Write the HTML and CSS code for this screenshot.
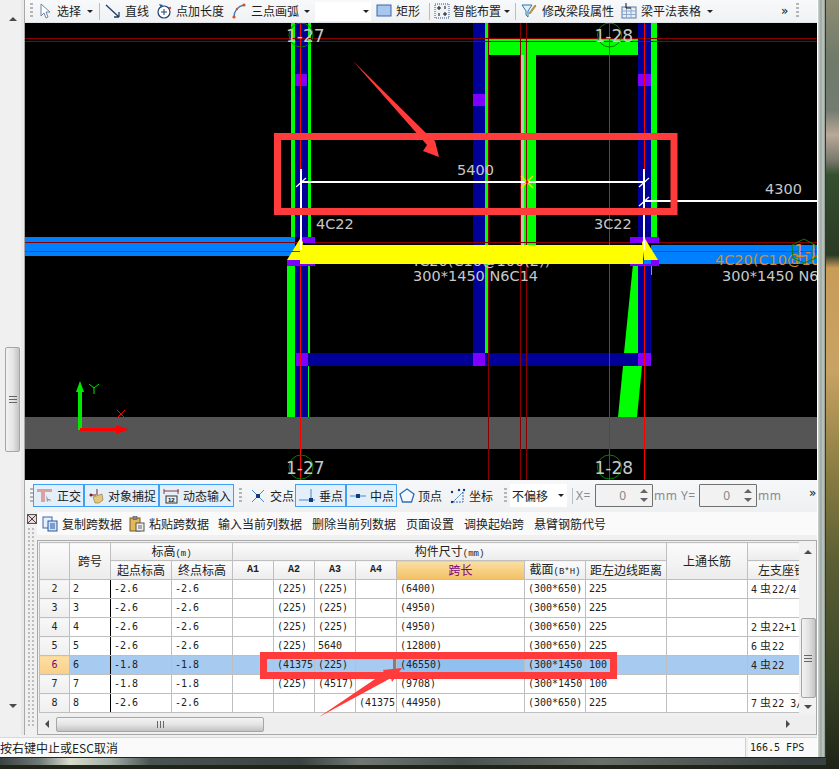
FILE: index.html
```html
<!DOCTYPE html>
<html lang="zh-CN">
<head>
<meta charset="utf-8">
<title>梁平法表格</title>
<link rel="stylesheet" href="styles.css">
</head>
<body>
<div class="screen">
  <div class="window">
    <div class="window-main">
      <div class="columns">
        <aside class="side">
          <div class="side-scroll">
            <span class="arrow-up"></span>
            <div class="side-thumb"><span class="thumb-lines"></span></div>
            <span class="arrow-down"></span>
          </div>
        </aside>
        <main class="content">
          <div class="tb tb-top">
            <span class="grip"></span>
            <div class="tool w-select"><svg class="ic" viewBox="0 0 16 16"><path d="M4 1v12l3-3 2 5 2-1-2-5h4z" fill="#fff" stroke="#6f86a8"/></svg><span>选择</span></div>
            <span class="caret"></span>
            <span class="sep sep-a"></span>
            <div class="tool w-line"><svg class="ic" viewBox="0 0 16 16"><path d="M1 2l13 12M14 14v-5M14 14H9" fill="none" stroke="#1f3f6f" stroke-width="1.3"/></svg><span>直线</span></div>
            <div class="tool w-len"><svg class="ic" viewBox="0 0 16 16"><circle cx="8" cy="9" r="6" fill="#fff" stroke="#1f3f6f" stroke-width="1.2"/><path d="M8 6v6M5 9h6" stroke="#1f3f6f"/><path d="M3 1l2 4 2-3z" fill="#1f5fa0"/><circle cx="14" cy="5" r="1.2" fill="#d9532a"/></svg><span>点加长度</span></div>
            <div class="tool w-arc"><svg class="ic" viewBox="0 0 16 16"><path d="M3 14C3 8 7 3 13 2" fill="none" stroke="#3f78b8" stroke-width="1.4"/><circle cx="3" cy="14" r="1.6" fill="#d9532a"/><circle cx="13" cy="2" r="1.6" fill="#d9532a"/><circle cx="6" cy="6" r="1.2" fill="#d9532a"/></svg><span>三点画弧</span></div>
            <span class="caret"></span>
            <div class="combo-top"><span class="caret"></span></div>
            <div class="tool w-rect"><svg class="ic" viewBox="0 0 16 16"><rect x="1" y="2" width="14" height="11" fill="#a9c6ee" stroke="#3a66b0"/></svg><span>矩形</span></div>
            <span class="sep"></span>
            <div class="tool w-smart"><svg class="ic" viewBox="0 0 16 16"><rect x="1" y="1" width="14" height="14" fill="#eef3f8" stroke="#33507a" stroke-dasharray="1 1"/><path d="M5 3v4M3 5h4M11 9v4M9 11h4M11 3v3M5 10v3" stroke="#111"/></svg><span>智能布置</span></div>
            <span class="caret"></span>
            <span class="sep"></span>
            <div class="tool w-mod"><svg class="ic" viewBox="0 0 16 16"><path d="M1 2h10L7 8v6l-2-2V8z" fill="#dff0fa" stroke="#2d79a8"/><path d="M8 10l6-8 1 1-6 8z" fill="#d8a040" stroke="#665020" stroke-width=".5"/></svg><span>修改梁段属性</span></div>
            <div class="tool w-tbl"><svg class="ic" viewBox="0 0 16 16"><rect x="1" y="4" width="14" height="11" fill="#e6eef8" stroke="#5a7aa8"/><path d="M1 8h14M1 11.500h14M5.500 4v11M10 4v11" stroke="#8fa8c8"/><path d="M5 0v5h5" fill="none" stroke="#111"/></svg><span>梁平法表格</span></div>
            <span class="caret"></span>
            <span class="chev">»</span>
            <span class="grip grip-end"></span>
          </div>

          <div class="canvas">
            <svg class="cad" viewBox="25 23 792 457" preserveAspectRatio="none">
              <rect class="k" x="25" y="23" width="792" height="457"/>
              <rect class="gray" x="25" y="417" width="792" height="32"/>

              <rect class="g" x="291" y="23" width="20" height="214"/>
              <rect class="b" x="295" y="23" width="13" height="214"/>
              <rect class="p" x="295" y="74" width="12" height="12"/>
              <rect class="g" x="287" y="266" width="22" height="151"/>
              <rect class="b" x="295" y="266" width="13" height="151"/>
              <rect class="g" x="308" y="266" width="2" height="100"/>

              <rect class="b" x="473" y="23" width="12" height="343"/>
              <rect class="g" x="485" y="23" width="3.500" height="343"/>
              <rect class="p" x="473" y="94" width="12" height="12"/>

              <rect class="g" x="488" y="39" width="150" height="16"/>
              <rect class="g" x="524" y="55" width="12" height="192"/>
              <rect class="lg" x="521" y="55" width="3" height="192"/>

              <polygon class="g" points="633,264 638,264 638,353 624,353"/>
              <polygon class="g" points="623,366 642,366 637,417 618,417"/>
              <rect class="g" x="651" y="23" width="6" height="214"/>
              <rect class="b" x="638" y="23" width="13" height="214"/>
              <rect class="p" x="638" y="74" width="13" height="12"/>
              <rect class="b" x="638" y="264" width="13" height="89"/>
              <rect class="g" x="651" y="264" width="1" height="11"/>
              <rect class="b" x="297" y="353" width="341" height="13"/>
              <rect class="p" x="296" y="353" width="12" height="13"/>
              <rect class="p" x="473" y="353" width="12" height="13"/>
              <rect class="p" x="638" y="353" width="13" height="13"/>

              <rect class="sky" x="25" y="237" width="270" height="19"/>
              <rect class="sky" x="651" y="245" width="166" height="19"/>

              <rect class="dr" x="25" y="38" width="792" height="1"/>
              <rect class="dr" x="25" y="41" width="792" height="1"/>
              <rect class="dr" x="25" y="242" width="792" height="1"/>
              <rect class="r" x="300" y="23" width="1" height="457"/>
              <rect class="dr" x="488" y="23" width="1" height="457"/>
              <rect class="dr" x="520" y="23" width="1" height="457"/>
              <rect class="dr" x="526" y="23" width="1" height="457"/>
              <rect class="r" x="609" y="23" width="1" height="457"/>
              <rect class="r" x="644" y="23" width="1" height="457"/>
              <rect class="r" x="25" y="251" width="275" height="1"/>
              <rect class="r" x="645" y="251" width="172" height="1"/>

              <text class="t t-md" x="457" y="175">5400</text>
              <text class="t t-md" x="765" y="194">4300</text>
              <text class="t t-md" x="316" y="229">4C22</text>
              <text class="t t-md" x="594" y="229">3C22</text>
              <text class="t t-md" x="410" y="266">4C20(C10@100(2))</text>

              <rect class="p" x="287" y="260" width="28" height="6"/>
              <rect class="p" x="301" y="237" width="14" height="6"/>
              <rect class="p" x="630" y="260" width="29" height="6"/>
              <rect class="p" x="630" y="237" width="29" height="6"/>
              <polygon class="y" points="301,237 287,260 301,260 303,243"/>
              <polygon class="y" points="644,237 658,260 644,260 642,243"/>
              <rect class="y" x="300" y="245" width="343" height="19"/>
              <rect class="sky" x="644" y="260" width="7" height="4"/>
              <rect class="r" x="288" y="251" width="12" height="1"/>

              <rect class="w" x="300" y="181" width="345" height="2"/>
              <rect class="w" x="645" y="200" width="172" height="2"/>
              <rect class="w" x="300" y="169" width="2" height="81"/>
              <rect class="w" x="643" y="169" width="2" height="81"/>
              <path class="tick" d="M296 187l10-9M639 187l10-9M639 206l10-9"/>
              <path class="snap" d="M521 176l12 12M533 176l-12 12"/>
              <circle class="r" cx="527" cy="182" r="1.500"/>

              <text class="t t-md" x="413" y="281">300*1450 N6C14</text>
              <text class="t t-md" x="722" y="281">300*1450 N6C14</text>
              <text class="t t-md t-or" x="715" y="265">4C20(C10@100(2))</text>
              <text class="t t-lg t-or" x="794" y="257">1-L</text>
              <polygon class="axis" points="804,239 815,245 816,258 804,263 793,258 792,245"/>

              <circle class="axis" cx="301" cy="35" r="12"/>
              <circle class="axis" cx="609.500" cy="35" r="12"/>
              <circle class="axis" cx="301" cy="467" r="12"/>
              <circle class="axis" cx="609.500" cy="467" r="12"/>
              <text class="t t-lg" x="286" y="42">1-27</text>
              <text class="t t-lg" x="594.500" y="42">1-28</text>
              <text class="t t-lg" x="286" y="474">1-27</text>
              <text class="t t-lg" x="594.500" y="474">1-28</text>

              <rect class="lime" x="78" y="386" width="4" height="44"/>
              <polygon class="lime" points="80,381 84,392 76,392"/>
              <rect class="r" x="80" y="428" width="38" height="3"/>
              <polygon class="r" points="129,429.500 116,425 116,434"/>
              <path class="uy" d="M89 384l5 4 5-4M94 388v6"/>
              <path class="ux" d="M117 410l8 8M125 410l-8 8"/>
            </svg>
          </div>

          <div class="tb tb-snap">
            <span class="grip"></span>
            <div class="snapbtn on w-2"><svg class="ic" viewBox="0 0 16 16"><path d="M0 1h15v3H8v10H4V4H0z" fill="#dba0a0"/><path d="M9 7l1 7 2-2 2 2-1-3h-2z" fill="#8a9ab0"/></svg><span>正交</span></div>
            <div class="snapbtn on w-4"><svg class="ic" viewBox="0 0 16 16"><path d="M3 7h5M9 1v6" stroke="#7a2020"/><circle cx="3" cy="7" r="1.500" fill="#7a2020"/><path d="M5 9l9-3 1 6-4 3H7z" fill="#e2c77c" stroke="#8d6e30" stroke-width=".6"/></svg><span>对象捕捉</span></div>
            <div class="snapbtn on w-4"><svg class="ic" viewBox="0 0 16 16"><path d="M1 3h15M1 1v5M15 1v5" stroke="#8a3a3a" fill="none"/><rect x="3" y="8" width="11" height="7" fill="#eee" stroke="#333"/><text class="ic-num" x="5" y="14">12</text></svg><span>动态输入</span></div>
            <span class="grip grip-mid"></span>
            <div class="snapbtn w-2b"><svg class="ic" viewBox="0 0 16 16"><path d="M2 2l12 12M14 2L2 14" stroke="#3a8ad8"/><rect x="6" y="6" width="4" height="4" fill="#103a80"/></svg><span>交点</span></div>
            <div class="snapbtn on w-2c"><svg class="ic" viewBox="0 0 16 16"><path d="M0 12h16" stroke="#3a8ad8"/><path d="M12 1v11" stroke="#3a8ad8"/><rect x="10" y="10" width="4" height="4" fill="#103a80"/></svg><span>垂点</span></div>
            <div class="snapbtn on w-2c"><svg class="ic" viewBox="0 0 16 16"><path d="M0 8h16" stroke="#3a8ad8"/><rect x="6" y="6" width="4" height="4" fill="#103a80"/></svg><span>中点</span></div>
            <div class="snapbtn w-2d"><svg class="ic" viewBox="0 0 16 16"><path d="M8 1l7 5-2.500 8h-9L1 6z" fill="#f4f8fd" stroke="#2a6fc0" stroke-width="1.300"/></svg><span>顶点</span></div>
            <div class="snapbtn w-2d"><svg class="ic" viewBox="0 0 16 16"><path d="M3 14h10V4M3 14L13 4" fill="none" stroke="#2a6fc0" stroke-dasharray="2 1"/><circle cx="2" cy="14" r="1.200" fill="#103a80"/><circle cx="14" cy="2" r="1.200" fill="#103a80"/><circle cx="2" cy="4" r="1.200" fill="#103a80"/><circle cx="9" cy="2" r="1.200" fill="#103a80"/></svg><span>坐标</span></div>
            <span class="grip grip-mid2"></span>
            <div class="combo"><span>不偏移</span><span class="caret"></span></div>
            <span class="sep sep-sm"></span>
            <span class="lab lab-x">X=</span>
            <div class="spin"><span>0</span><span class="spin-btns"><i class="s-up"></i><i class="s-dn"></i></span></div>
            <span class="lab lab-mm">mm</span>
            <span class="lab lab-y">Y=</span>
            <div class="spin"><span>0</span><span class="spin-btns"><i class="s-up"></i><i class="s-dn"></i></span></div>
            <span class="lab lab-mm2">mm</span>
            <span class="chev chev-2">»</span>
          </div>

          <div class="dock">
            <div class="dock-grip">
              <svg class="dock-x" viewBox="0 0 10 10"><rect x=".5" y=".5" width="9" height="9" fill="#e8d8d8" stroke="#555"/><path d="M1 1l8 8M9 1l-8 8" stroke="#444"/></svg>
              <div class="dots"></div>
            </div>
            <div class="dock-main">
              <div class="tb-table">
                <div class="act act-1"><svg class="ic" viewBox="0 0 16 16"><rect x="1" y="1" width="9" height="11" fill="#e6f0fb" stroke="#3a66b0"/><rect x="6" y="5" width="9" height="10" fill="#cfe2f8" stroke="#2a56a0"/><path d="M8 8h5M8 10h5M8 12h5" stroke="#2a56a0"/></svg><span>复制跨数据</span></div>
                <div class="act act-2"><svg class="ic" viewBox="0 0 16 16"><rect x="1" y="2" width="10" height="13" fill="#e3b75a" stroke="#7b5a1a"/><rect x="4" y="0.500" width="4" height="3" fill="#888" stroke="#444" stroke-width=".5"/><rect x="7" y="7" width="8" height="8" fill="#eee" stroke="#555"/><path d="M9 10h4M9 12h4" stroke="#666"/></svg><span>粘贴跨数据</span></div>
                <div class="act act-3"><span>输入当前列数据</span></div>
                <div class="act act-3"><span>删除当前列数据</span></div>
                <div class="act act-4"><span>页面设置</span></div>
                <div class="act act-5"><span>调换起始跨</span></div>
                <div class="act"><span>悬臂钢筋代号</span></div>
              </div>
              <div class="frame">
                <div class="frame-top">
                  <div class="grid-clip">
                    <table class="grid">
                      <colgroup>
                        <col class="c-rh"><col class="c-no"><col class="c-el"><col class="c-el">
                        <col class="c-a"><col class="c-a"><col class="c-a"><col class="c-a">
                        <col class="c-len"><col class="c-el"><col class="c-dist"><col class="c-dist"><col class="c-dist">
                      </colgroup>
                      <thead>
                        <tr>
                          <th rowspan="2"></th>
                          <th rowspan="2">跨号</th>
                          <th colspan="2">标高<small>(m)</small></th>
                          <th colspan="7">构件尺寸<small>(mm)</small></th>
                          <th rowspan="2">上通长筋</th>
                          <th class="th-blank"></th>
                        </tr>
                        <tr>
                          <th>起点标高</th><th>终点标高</th>
                          <th class="th-a">A1</th><th class="th-a">A2</th><th class="th-a">A3</th><th class="th-a">A4</th>
                          <th class="th-sel">跨长</th>
                          <th>截面<small>(B*H)</small></th>
                          <th>距左边线距离</th>
                          <th class="th-left">左支座钢筋</th>
                        </tr>
                      </thead>
                      <tbody>
                        <tr><th class="rh">2</th><td class="no">2</td><td>-2.6</td><td>-2.6</td><td></td><td>(225)</td><td>(225)</td><td></td><td>(6400)</td><td>(300*650)</td><td>225</td><td></td><td>4<b class="rb">虫</b>22/4<b class="rb">虫</b>22</td></tr>
                        <tr><th class="rh">3</th><td class="no">3</td><td>-2.6</td><td>-2.6</td><td></td><td>(225)</td><td>(225)</td><td></td><td>(4950)</td><td>(300*650)</td><td>225</td><td></td><td></td></tr>
                        <tr><th class="rh">4</th><td class="no">4</td><td>-2.6</td><td>-2.6</td><td></td><td>(225)</td><td>(225)</td><td></td><td>(4950)</td><td>(300*650)</td><td>225</td><td></td><td>2<b class="rb">虫</b>22+1<b class="rb">虫</b>22</td></tr>
                        <tr><th class="rh">5</th><td class="no">5</td><td>-2.6</td><td>-2.6</td><td></td><td>(225)</td><td>5640</td><td></td><td>(12800)</td><td>(300*650)</td><td>225</td><td></td><td>6<b class="rb">虫</b>22</td></tr>
                        <tr class="row-sel"><th class="rh rh-sel">6</th><td class="no">6</td><td>-1.8</td><td>-1.8</td><td></td><td>(41375</td><td>(225)</td><td class="mark"></td><td class="cell-sel">(46550)</td><td>(300*1450</td><td>100</td><td></td><td>4<b class="rb">虫</b>22</td></tr>
                        <tr><th class="rh">7</th><td class="no">7</td><td>-1.8</td><td>-1.8</td><td></td><td>(225)</td><td>(4517)</td><td></td><td>(9708)</td><td>(300*1450</td><td>100</td><td></td><td></td></tr>
                        <tr><th class="rh">8</th><td class="no">8</td><td>-2.6</td><td>-2.6</td><td></td><td></td><td></td><td>(41375</td><td>(44950)</td><td>(300*650)</td><td>225</td><td></td><td>7<b class="rb">虫</b>22 3/2</td></tr>
                      </tbody>
                    </table>
                  </div>
                  <div class="vscroll">
                    <span class="arrow-up"></span>
                    <div class="v-thumb"><span class="thumb-lines"></span></div>
                    <span class="arrow-down"></span>
                  </div>
                </div>
                <div class="hscroll">
                  <span class="arrow-left"></span>
                  <div class="h-thumb"><span class="thumb-lines-v"></span></div>
                  <span class="arrow-right"></span>
                </div>
              </div>
            </div>
          </div>
        </main>
      </div>
      <footer class="status">
        <div class="status-msg">按右键中止或ESC取消</div>
        <div class="status-fps">166.5 FPS</div>
      </footer>
    </div>
    <div class="window-edge"></div>
  </div>
  <div class="window-bottom"></div>

  <svg class="marks" viewBox="0 0 839 769">
    <path class="mark-box" d="M277.500 136.500h396.500v75H277.500z"/>
    <path class="mark-box" d="M263.500 655.500h350v20h-350z"/>
    <polygon class="mark-arrow" points="353,61 429,136 435,141 439,157 423,151 427,145"/>
    <polygon class="mark-arrow" points="319,717 384,673 383,670 402,668 392,682 391,678"/>
  </svg>
</div>
</body>
</html>
```

FILE: styles.css
```css
* { box-sizing: border-box; }
html, body { margin: 0; padding: 0; background: #4a5034; }
body { width: 839px; height: 769px; overflow: hidden; }

.screen {
  position: relative;
  width: 839px;
  height: 769px;
  overflow: hidden;
  font: 12px/1 "Noto Sans CJK SC", "Liberation Sans", sans-serif;
  color: #1c1c1c;
  background-color: #4a5034;
  background-image: linear-gradient(180deg, #8f8d72 0, #6f7a6a 60px, #737c70 110px, #b9a998 135px, #7a7a6e 160px, #34502f 175px, #2b3a24 255px, #c99b58 268px, #c8a364 370px, #8c7d42 470px, #5c5f34 560px, #3a4427 680px, #1e2416 769px);
}

.window { display: flex; width: 826px; height: 757px; }
.window-main { width: 817px; display: flex; flex-direction: column; background: #f0f0f0; }
.window-edge {
  width: 9px;
  background: linear-gradient(90deg, #fff 0 1px, #cfd4d2 1px, #9aa5a0 4px, #c4cbc4 6px, #8b958e 8px, #2f3a36 8px);
}
.window-bottom {
  height: 8px;
  width: 826px;
  background: linear-gradient(90deg, #3a4242 0, #707a78 40px, #d8dccb 70px, #a5b0a8 110px, #4a5452 150px, #3b4342 300px, #717874 360px, #4a5250 460px, #6a706a 600px, #394140 800px);
  border-top: 1px solid #222;
}

.columns { flex: 1; display: flex; min-height: 0; }

/* left scrollbar strip */
.side { width: 25px; padding-left: 4px; background: #f0f0f0; border-right: 1px solid #a8a8a8; box-shadow: inset -3px 0 0 #e9e9e9; }
.side-scroll { position: relative; width: 17px; height: 735px; display: flex; flex-direction: column; align-items: center; padding-top: 17px; }
.side-thumb { width: 15px; height: 105px; margin-top: 326px; background: linear-gradient(90deg, #f2f2f2, #e6e6e6 50%, #c4c4c4); border: 1px solid #a6a6a6; border-radius: 2px; display: flex; align-items: center; justify-content: center; }
.side-scroll .arrow-down { margin-top: 252px; }

.arrow-up, .arrow-down, .arrow-left, .arrow-right { display: block; width: 0; height: 0; border-style: solid; border-color: transparent; flex: none; }
.arrow-up { border-width: 0 4px 4px; border-bottom-color: #4a4a4a; }
.arrow-down { border-width: 4px 4px 0; border-top-color: #4a4a4a; }
.arrow-left { border-width: 4px 4px 4px 0; border-right-color: #4a4a4a; }
.arrow-right { border-width: 4px 0 4px 4px; border-left-color: #4a4a4a; }

.thumb-lines { display: block; width: 8px; height: 7px; border-top: 1px solid #666; border-bottom: 1px solid #666; background: linear-gradient(#666, #666) center / 100% 1px no-repeat; }
.thumb-lines-v { display: block; width: 7px; height: 7px; border-left: 1px solid #666; border-right: 1px solid #666; background: linear-gradient(#666, #666) center / 1px 100% no-repeat; }

.content { width: 792px; display: flex; flex-direction: column; }

/* toolbars */
.tb { display: flex; align-items: center; white-space: nowrap; }
.tb-top { height: 23px; background: linear-gradient(#f8f9fa, #eff1f3); padding-left: 5px; border-bottom: 1px solid #dfe3e6; }
.ic { width: 16px; height: 16px; flex: none; }
.ic-num { font: 700 6px/1 "Liberation Sans", sans-serif; fill: #111; }
.tool { display: flex; align-items: center; gap: 4px; height: 100%; flex: none; }
.grip { flex: none; width: 3px; height: 16px; background: repeating-linear-gradient(#b5b5b5 0 2px, transparent 2px 4px); }
.grip-end { margin-left: 8px; }
.grip-mid { margin: 0 4px 0 5px; }
.grip-mid2 { margin: 0 3px 0 7px; }
.caret { flex: none; width: 0; height: 0; border-style: solid; border-width: 3px 3.500px 0; border-color: #222 transparent transparent; }
.sep { flex: none; width: 1px; height: 17px; background: #b8bec4; margin: 0 4px 0 5px; }
.sep-a { margin: 0 5px 0 6px; }
.sep-sm { height: 16px; margin: 0 2px 0 5px; }
.chev { flex: none; font: 12px/1 "DejaVu Sans", sans-serif; color: #111; }
.tb-top > .chev { margin-left: 68px; }
.chev-2 { margin-left: 26px; margin-bottom: 6px; }

.w-select { margin-left: 4px; width: 50px; }
.w-line { width: 51px; }
.w-len { width: 75px; }
.w-arc { width: 73px; }
.combo-top { width: 56px; height: 19px; margin-left: 5px; background: #fff; display: flex; align-items: center; justify-content: flex-end; padding-right: 2px; flex: none; }
.w-rect { width: 48px; margin-left: 5px; }
.w-smart { width: 70px; gap: 3px; }
.w-mod { width: 100px; gap: 5px; margin-left: 1px; }
.w-tbl { width: 86px; }

.canvas { height: 457px; background: #000; flex: none; }
.cad { display: block; width: 792px; height: 457px; }
.k { fill: #000; }
.gray { fill: #555; }
.g { fill: #00ff00; }
.lg { fill: #b4c8b4; }
.lime { fill: #00e800; }
.b { fill: #000099; }
.p { fill: #8000ff; }
.sky { fill: #0080ff; }
.r { fill: #ff0000; }
.dr { fill: #8a0000; }
.y { fill: #ffff00; }
.w { fill: #fff; }
.tick { stroke: #fff; stroke-width: 1.200; fill: none; }
.snap { stroke: #ffe800; stroke-width: 1.200; fill: none; }
.axis { fill: none; stroke: #008000; stroke-width: 1; }
.uy { stroke: #00e800; fill: none; }
.ux { stroke: #ff0000; fill: none; }
.t { fill: #c8c8c8; font-family: "DejaVu Sans", sans-serif; }
.t-md { font-size: 14.500px; }
.t-lg { font-size: 17px; }
.t-or { fill: #d88a30; }

.tb-snap { height: 31px; flex: none; background: linear-gradient(#f6f7f8, #eef0f2); padding-left: 5px; }
.snapbtn { flex: none; height: 23px; display: flex; align-items: center; gap: 4px; padding-left: 3px; border: 1px solid transparent; }
.snapbtn.on { border-color: #3f9ff5; background: #e4eff9; }
.w-2 { width: 51px; }
.w-4 { width: 75px; }
.w-2b { width: 49px; }
.w-2c { width: 51px; }
.w-2d { width: 49px; padding-left: 1px; gap: 3px; }
.w-2d + .w-2d { margin-left: 2px; }
.combo { flex: none; width: 57px; height: 23px; background: #fff; display: flex; align-items: center; justify-content: space-between; padding: 0 3px 0 2px; color: #222; }
.lab { flex: none; color: #8a8a8a; font: 12px/1 "Noto Sans", "DejaVu Sans", sans-serif; letter-spacing: .5px; }
.lab-mm2 { flex: none; width: 25px; margin-left: 1px; color: #8a8a8a; font: 12px/1 "Noto Sans", sans-serif; letter-spacing: .5px; }
.lab-x { width: 19px; margin-left: 1px; }
.lab-mm { width: 27px; margin-left: 1px; }
.lab-y { width: 18px; }
.spin { flex: none; width: 58px; height: 23px; border: 1px solid #707070; border-radius: 1px; background: #f2f2f2; display: flex; align-items: center; justify-content: flex-end; color: #888; font: 12px/1 "Noto Sans", sans-serif; }
.spin-btns { width: 17px; height: 100%; margin-left: 9px; display: flex; flex-direction: column; align-items: center; justify-content: center; gap: 5px; }
.s-up, .s-dn { display: block; width: 0; height: 0; border-style: solid; border-color: transparent; }
.s-up { border-width: 0 4px 4px; border-bottom-color: #666; }
.s-dn { border-width: 4px 4px 0; border-top-color: #666; }

/* dock under the canvas */
.dock { flex: 1; display: flex; min-height: 0; background: #f0f0f0; }
.dock-grip { width: 12px; padding: 3px 0 0 2px; flex: none; }
.dock-x { display: block; width: 10px; height: 10px; }
.dots { width: 8px; height: 200px; margin-top: 3px; background: radial-gradient(circle, #bdbdbd 1px, transparent 1px) 0 0 / 4px 4px; }
.dock-main { flex: 1; min-width: 0; display: flex; flex-direction: column; }

.tb-table { height: 23px; flex: none; margin-top: 1px; display: flex; align-items: center; padding-left: 5px; background: #fafafa; border-radius: 3px 0 0 3px; color: #222; white-space: nowrap; }
.act { display: flex; align-items: center; gap: 4px; flex: none; margin-right: 10px; }
.act-1 { margin-right: 7px; }
.act-2 { margin-right: 9px; }

.frame { margin-top: 5px; height: 195px; width: 780px; border: 1px solid #a8a8a8; display: flex; flex-direction: column; background: #f0f0f0; }
.frame-top { display: flex; height: 175px; flex: none; }
.grid-clip { width: 761px; height: 172px; padding: 1px 0 0 1px; overflow: hidden; flex: none; }
.grid { table-layout: fixed; border-collapse: collapse; width: 788px; background: #fff; }
.c-rh { width: 30px; }
.c-no { width: 41px; }
.c-el { width: 61px; }
.c-a { width: 41px; }
.c-len { width: 128px; }
.c-dist { width: 81px; }
.grid tr { height: 19px; }
.grid thead tr:first-child { height: 18px; }
.grid th, .grid td { border: 1px solid #bfbfbf; padding: 0; overflow: hidden; white-space: nowrap; }
.grid thead th { background: linear-gradient(#fbfbfb, #ececec); font-weight: 400; font-size: 12px; color: #222; text-align: center; }
.grid small { font: 9px/1 "Liberation Mono", monospace; }
.grid thead th.th-a { font: 700 10px/1 "Liberation Mono", monospace; }
.grid thead th.th-sel { background: linear-gradient(#fbdfa6, #f3c062); color: #800080; }
.grid thead th.th-left { text-align: left; padding-left: 10px; }
.grid td { font: 10px/1 "DejaVu Sans Mono", monospace; color: #222; padding-left: 3px; }
.grid .no { border-right: 1px solid #000; }
.grid th.rh { background: linear-gradient(#f8f8f8, #efefef); font: 10px/1 "DejaVu Sans Mono", monospace; color: #222; text-align: center; }
.grid th.rh-sel { background: linear-gradient(#fbdfa6, #f9cf85); color: #7a007a; }
.row-sel td { background: #a6caf0; }
.grid td.cell-sel { background: #90c0f0; }
.grid td.mark { box-shadow: inset -3px 0 0 #808080; }
.rb { font: 400 11px/1 "Noto Sans CJK SC", sans-serif; margin: 0 1px 0 3px; }

.vscroll { width: 16px; height: 172px; margin-left: 1px; flex: none; display: flex; flex-direction: column; align-items: center; padding-top: 9px; background: #f2f2f2; }
.v-thumb { width: 15px; height: 80px; margin-top: 64px; border: 1px solid #a6a6a6; border-radius: 2px; background: linear-gradient(90deg, #f2f2f2, #e2e2e2 50%, #c4c4c4); display: flex; align-items: center; justify-content: center; }
.vscroll .arrow-down { margin-top: 7px; }

.hscroll { flex: none; height: 16px; display: flex; align-items: center; padding-left: 7px; background: #eeeeee; }
.h-thumb { width: 208px; height: 15px; margin-left: 7px; border: 1px solid #a6a6a6; border-radius: 2px; background: linear-gradient(#f4f4f4, #e4e4e4 50%, #c2c2c2); display: flex; align-items: center; justify-content: center; }
.hscroll .arrow-right { margin-left: 522px; }

.status { height: 22px; flex: none; display: flex; padding-top: 2px; background: #f0f0f0; color: #1c1c1c; }
.status-msg { flex: 1; height: 20px; display: flex; align-items: center; background: #fafafa; border-top: 1px solid #d8d8d8; border-right: 1px solid #d0d0d0; }
.status-fps { width: 69px; margin-left: 2px; padding-left: 2px; display: flex; align-items: center; height: 20px; background: #fafafa; border-top: 1px solid #d8d8d8; font: 10px/1 "DejaVu Sans Mono", monospace; }

/* red hand-drawn annotations on top of the screenshot */
.marks { position: absolute; left: 0; top: 0; width: 839px; height: 769px; pointer-events: none; }
.mark-box { fill: none; stroke: #ff3b3b; stroke-width: 7; }
.mark-arrow { fill: #ff3b3b; }
```
